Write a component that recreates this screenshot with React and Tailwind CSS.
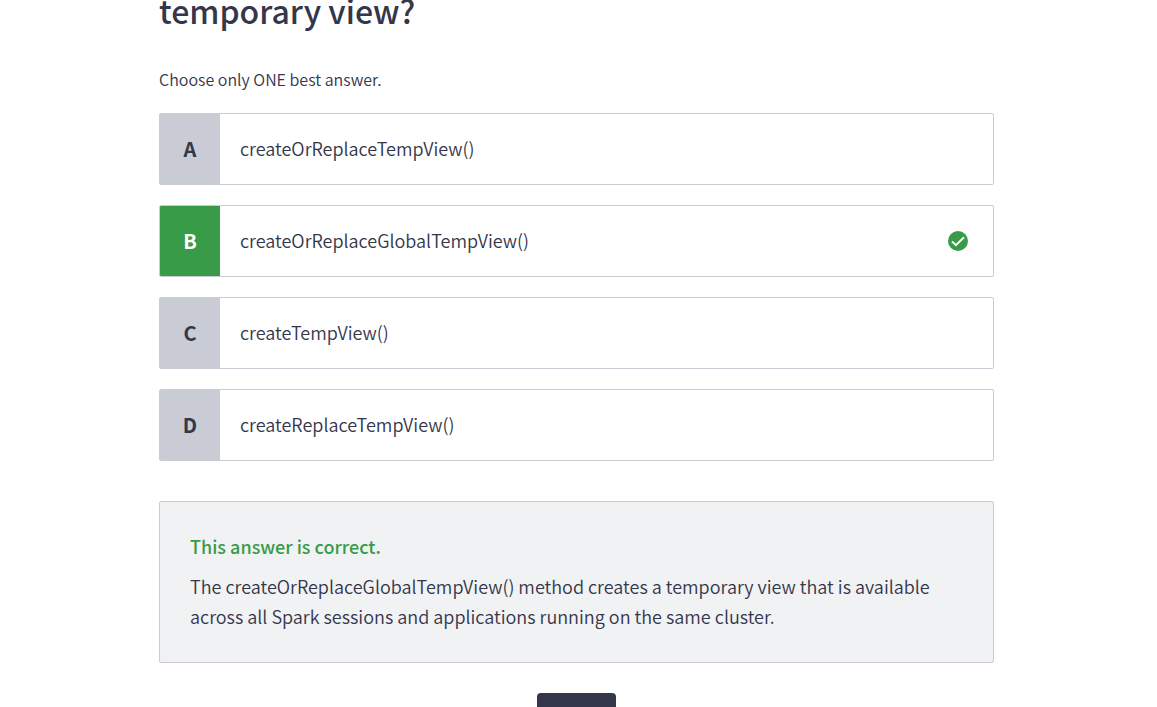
import React, { useState } from "react";

const options = [
  { letter: "A", text: "createOrReplaceTempView()" },
  { letter: "B", text: "createOrReplaceGlobalTempView()" },
  { letter: "C", text: "createTempView()" },
  { letter: "D", text: "createReplaceTempView()" },
];
const correct = "B";

function CheckIcon() {
  return (
    <svg viewBox="0 0 20 20" className="h-5 w-5" role="img" aria-label="Correct">
      <circle cx="10" cy="10" r="10" fill="#389b48" />
      <path d="M4 10.4 7.9 14.2 16 6.3" fill="none" stroke="#fff" strokeWidth="2" />
    </svg>
  );
}

function Option({ option, selected, onSelect }) {
  const isCorrect = selected && option.letter === correct;
  return (
    <label className="relative flex h-18 cursor-pointer items-stretch overflow-hidden rounded-xs border border-[#c9cbd5] bg-white">
      <input
        type="radio"
        name="answer"
        value={option.letter}
        checked={selected}
        onChange={onSelect}
        className="sr-only"
      />
      <span
        className={
          isCorrect
            ? "flex w-15 shrink-0 items-center justify-center bg-[#389b48] text-xl font-bold text-white"
            : "flex w-15 shrink-0 items-center justify-center bg-[#c9cbd5] text-xl font-bold"
        }
      >
        {option.letter}
      </span>
      <span className="flex flex-1 items-center px-5 pb-0.5 text-lg">{option.text}</span>
      {isCorrect && (
        <span className="flex items-center pr-[25px]">
          <CheckIcon />
        </span>
      )}
    </label>
  );
}

export default function App() {
  const [answer, setAnswer] = useState("B");
  return (
    <div className="h-screen overflow-hidden bg-white pr-1 font-['Noto_Sans_CJK_SC',sans-serif] font-[350] text-[#34364a]">
      <main className="mx-auto -mt-2.5 w-full max-w-[835px]">
        <h1 className="text-[32px] leading-10 font-medium">temporary view?</h1>
        <form className="pt-[35px]">
          <fieldset>
            <legend className="text-base leading-7">Choose only ONE best answer.</legend>
            <div className="mt-5 flex flex-col gap-5">
              {options.map((o) => (
                <Option
                  key={o.letter}
                  option={o}
                  selected={answer === o.letter}
                  onSelect={() => setAnswer(o.letter)}
                />
              ))}
            </div>
          </fieldset>
          <section className="mt-10 rounded-xs border border-[#c9cbd5] bg-[#f1f2f4] px-[30px] pt-[29px] pb-[31px]">
            <h2 className="mb-2.5 text-lg leading-[30px] font-medium text-[#389b48]">This answer is correct.</h2>
            <p className="text-lg leading-[30px]">
              The createOrReplaceGlobalTempView() method creates a temporary view that is available across all Spark
              sessions and applications running on the same cluster.
            </p>
          </section>
          <button type="button" aria-label="Next" className="mx-auto mt-[30px] block h-12 w-[79px] rounded bg-[#34364a]" />
        </form>
      </main>
    </div>
  );
}
